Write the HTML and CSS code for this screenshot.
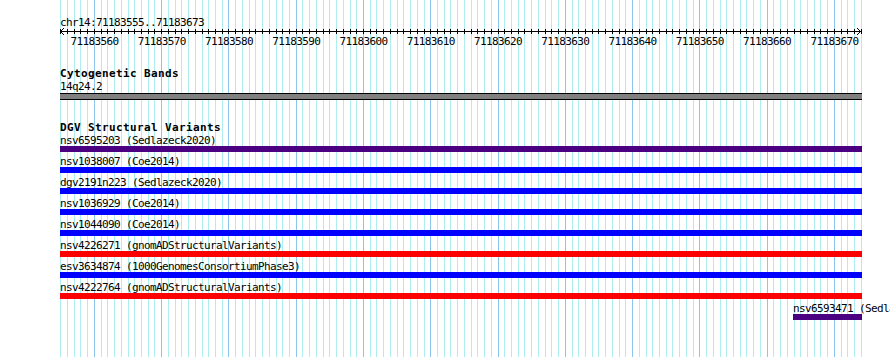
FILE: index.html
```html
<!DOCTYPE html>
<html>
<head>
<meta charset="utf-8">
<title>Genome browser</title>
<link rel="stylesheet" href="styles.css">
</head>
<body>
<div class="page">
  <svg class="grid" width="802" height="357" shape-rendering="crispEdges" aria-hidden="true">
    <defs>
      <g id="decade">
        <rect class="minor" x="0.3" y="0" width="1" height="357"/>
        <rect class="minor" x="7.03" y="0" width="1" height="357"/>
        <rect class="minor" x="13.75" y="0" width="1" height="357"/>
        <rect class="minor" x="20.48" y="0" width="1" height="357"/>
        <rect class="minor" x="27.21" y="0" width="1" height="357"/>
        <rect class="major" x="33.94" y="0" width="1" height="357"/>
        <rect class="minor" x="40.66" y="0" width="1" height="357"/>
        <rect class="minor" x="47.39" y="0" width="1" height="357"/>
        <rect class="minor" x="54.12" y="0" width="1" height="357"/>
        <rect class="minor" x="60.84" y="0" width="1" height="357"/>
      </g>
    </defs>
    <use href="#decade" x="0"/>
    <use href="#decade" x="67.269"/>
    <use href="#decade" x="134.538"/>
    <use href="#decade" x="201.807"/>
    <use href="#decade" x="269.076"/>
    <use href="#decade" x="336.345"/>
    <use href="#decade" x="403.614"/>
    <use href="#decade" x="470.883"/>
    <use href="#decade" x="538.152"/>
    <use href="#decade" x="605.421"/>
    <use href="#decade" x="672.690"/>
    <use href="#decade" x="739.959"/>
  </svg>

  <div class="tracks">
    <div class="locus">chr14:71183555..71183673</div>

    <svg class="ruler" width="802" height="20">
      <defs>
        <g id="ticks" shape-rendering="crispEdges">
          <rect x="0.3" y="0" width="1" height="5"/>
          <rect x="7.03" y="0" width="1" height="5"/>
          <rect x="13.75" y="0" width="1" height="5"/>
          <rect x="20.48" y="0" width="1" height="5"/>
          <rect x="27.21" y="0" width="1" height="5"/>
          <rect x="33.94" y="0" width="1" height="5"/>
          <rect x="40.66" y="0" width="1" height="5"/>
          <rect x="47.39" y="0" width="1" height="5"/>
          <rect x="54.12" y="0" width="1" height="5"/>
          <rect x="60.84" y="0" width="1" height="5"/>
        </g>
      </defs>
      <rect x="0" y="2" width="801" height="1" shape-rendering="crispEdges"/>
      <use href="#ticks" x="0"/>
      <use href="#ticks" x="67.269"/>
      <use href="#ticks" x="134.538"/>
      <use href="#ticks" x="201.807"/>
      <use href="#ticks" x="269.076"/>
      <use href="#ticks" x="336.345"/>
      <use href="#ticks" x="403.614"/>
      <use href="#ticks" x="470.883"/>
      <use href="#ticks" x="538.152"/>
      <use href="#ticks" x="605.421"/>
      <use href="#ticks" x="672.690"/>
      <use href="#ticks" x="739.959"/>
      <polyline class="arrow" points="4,-1 0.5,2.5 4,6"/>
      <polyline class="arrow" points="797,-1 800.5,2.5 797,6"/>
      <g class="ruler-labels">
        <text x="34.4" y="16">71183560</text>
        <text x="101.7" y="16">71183570</text>
        <text x="168.9" y="16">71183580</text>
        <text x="236.2" y="16">71183590</text>
        <text x="303.5" y="16">71183600</text>
        <text x="370.8" y="16">71183610</text>
        <text x="438.0" y="16">71183620</text>
        <text x="505.3" y="16">71183630</text>
        <text x="572.6" y="16">71183640</text>
        <text x="639.8" y="16">71183650</text>
        <text x="707.1" y="16">71183660</text>
        <text x="774.4" y="16">71183670</text>
      </g>
    </svg>

    <section class="track cyto">
      <div class="track-title">Cytogenetic Bands</div>
      <div class="label">14q24.2</div>
      <div class="band"></div>
    </section>

    <section class="track dgv">
      <div class="track-title">DGV Structural Variants</div>
      <div class="feature">
        <div class="label">nsv6595203 (Sedlazeck2020)</div>
        <div class="bar purple"></div>
      </div>
      <div class="feature">
        <div class="label">nsv1038007 (Coe2014)</div>
        <div class="bar blue"></div>
      </div>
      <div class="feature">
        <div class="label">dgv2191n223 (Sedlazeck2020)</div>
        <div class="bar blue"></div>
      </div>
      <div class="feature">
        <div class="label">nsv1036929 (Coe2014)</div>
        <div class="bar blue"></div>
      </div>
      <div class="feature">
        <div class="label">nsv1044090 (Coe2014)</div>
        <div class="bar blue"></div>
      </div>
      <div class="feature">
        <div class="label">nsv4226271 (gnomADStructuralVariants)</div>
        <div class="bar red"></div>
      </div>
      <div class="feature">
        <div class="label">esv3634874 (1000GenomesConsortiumPhase3)</div>
        <div class="bar blue"></div>
      </div>
      <div class="feature">
        <div class="label">nsv4222764 (gnomADStructuralVariants)</div>
        <div class="bar red"></div>
      </div>
      <div class="feature" style="margin-left: 733px">
        <div class="label">nsv6593471 (Sedlazeck2020)</div>
        <div class="bar purple" style="width: 69px"></div>
      </div>
    </section>
  </div>
</div>
</body>
</html>
```

FILE: styles.css
```css
html, body {
  margin: 0;
  padding: 0;
  background: #ffffff;
  overflow: hidden;
}

.page {
  position: relative;
  width: 890px;
  height: 357px;
  overflow: hidden;
  font-family: "DejaVu Sans Mono", "Liberation Mono", monospace;
  font-size: 11px;
  line-height: 13px;
  color: #000;
}

.grid {
  position: absolute;
  left: 60px;
  top: 0;
  z-index: 0;
}

.grid .minor { fill: #aeeef0; }
.grid .major { fill: #8cc6ec; }

.tracks {
  position: relative;
  z-index: 1;
  padding-left: 60px;
  padding-top: 16px;
}

.locus {
  height: 13px;
  letter-spacing: -0.62px;
  white-space: nowrap;
}

.ruler {
  display: block;
  overflow: visible;
  fill: #000;
}

.ruler .arrow {
  fill: none;
  stroke: #000;
  stroke-width: 1;
}

.ruler-labels text {
  font-family: "DejaVu Sans Mono", "Liberation Mono", monospace;
  font-size: 11px;
  letter-spacing: -0.62px;
  text-anchor: middle;
  fill: #000;
}

.track-title {
  height: 13px;
  font-weight: bold;
  letter-spacing: 0.38px;
  white-space: nowrap;
}

.label {
  height: 12px;
  letter-spacing: -0.62px;
  white-space: nowrap;
}

.cyto {
  margin-top: 18px;
}

.cyto .label {
  height: 13px;
}

.band {
  width: 802px;
  height: 5px;
  background: #808080;
  border-top: 1px solid #000;
  border-bottom: 1px solid #000;
}

.dgv {
  margin-top: 21px;
}

.feature {
  padding-bottom: 3px;
}

.bar {
  width: 802px;
  height: 6px;
}

.purple { background: #4b0082; }
.blue { background: #0000ff; }
.red { background: #ff0000; }
```
